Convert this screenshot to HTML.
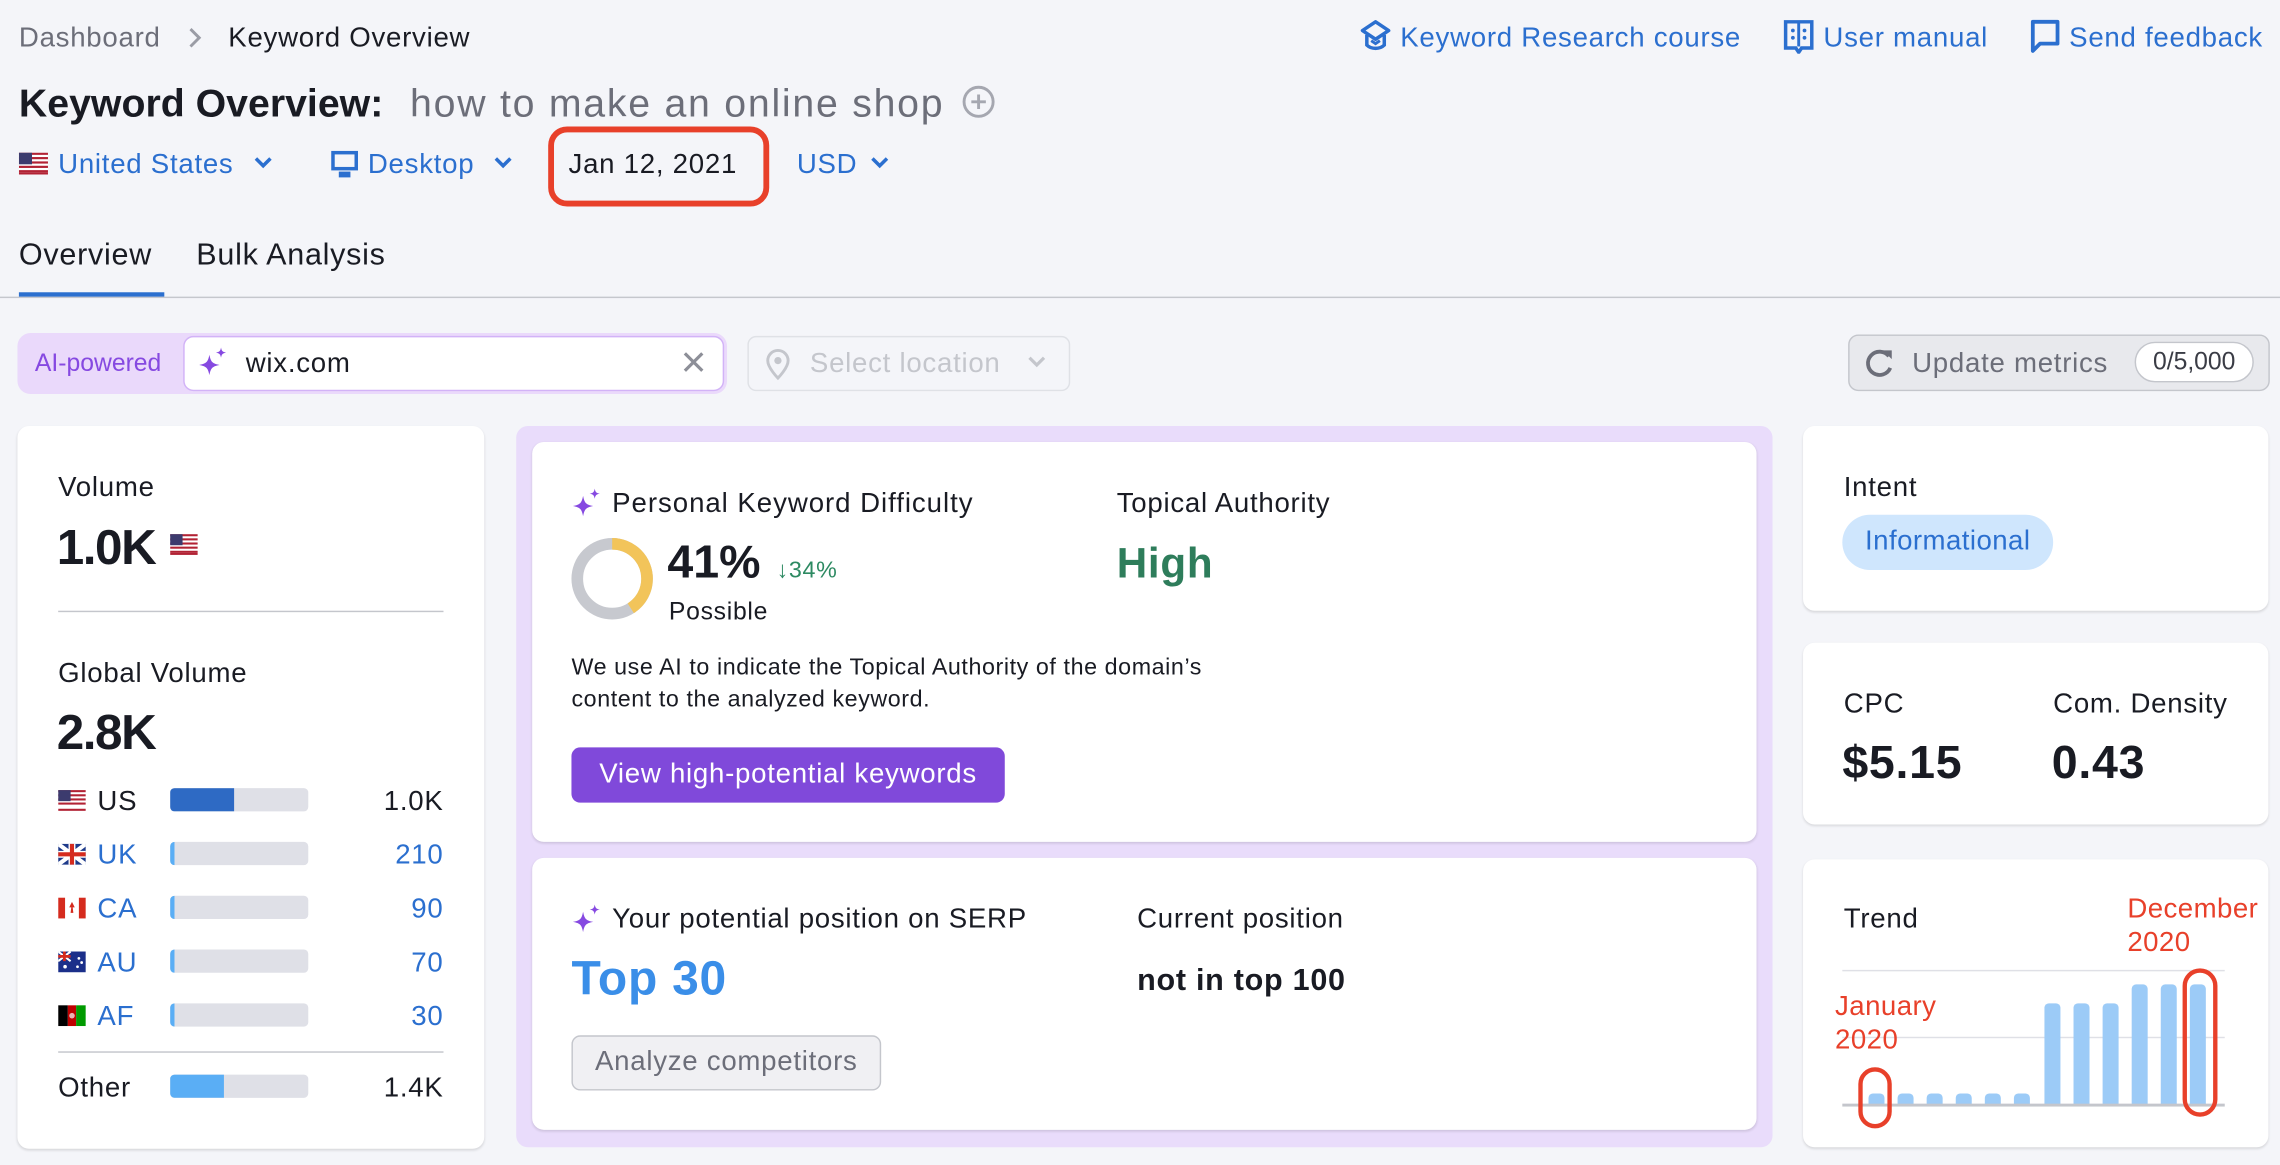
<!DOCTYPE html>
<html><head><meta charset="utf-8"><style>
*{margin:0;padding:0;box-sizing:border-box}
html,body{width:2280px;height:1164px;overflow:hidden;background:#f4f5f9}
#w{position:absolute;left:0;top:0;width:1568px;height:801px;transform:scale(1.454082);transform-origin:0 0;font-family:"Liberation Sans",sans-serif;color:#191b23;letter-spacing:.5px}
.a{position:absolute;white-space:nowrap}
.blue{color:#2b6fcf}
.gray{color:#6c6e79}
.card{position:absolute;background:#fff;border-radius:8px;box-shadow:0 1px 2px rgba(0,0,0,.12)}
.bar{position:absolute;left:117px;width:95px;height:16px;background:#dfe0e7;border-radius:3px;overflow:hidden}
.bar i{position:absolute;left:0;top:0;bottom:0;background:#5aaef5}
.tb{position:absolute;width:11px;background:#9ccbf7;border-radius:3px 3px 0 0}
</style></head><body><div id="w">
<div class="a gray" style="left:13px;top:16px;font-size:19px">Dashboard</div>
<svg class="a" style="left:128px;top:18px" width="12" height="16" viewBox="0 0 12 16"><path d="M3 2l6 6-6 6" fill="none" stroke="#9a9ca5" stroke-width="2"/></svg>
<div class="a" style="left:157px;top:16px;font-size:19px">Keyword Overview</div>
<svg class="a" style="left:934px;top:13px" width="24" height="24" viewBox="0 0 24 24"><path d="M12 2L3 8l9 6 9-6z" fill="none" stroke="#2b6fcf" stroke-width="2.4" stroke-linejoin="round"/><path d="M6 11v7c3 3 9 3 12 0v-7" fill="none" stroke="#2b6fcf" stroke-width="2.4"/><path d="M9 15l3 2 3-2" fill="none" stroke="#2b6fcf" stroke-width="2"/></svg>
<div class="a blue" style="left:963px;top:16px;font-size:19px">Keyword Research course</div>
<svg class="a" style="left:1226px;top:13px" width="22" height="24" viewBox="0 0 22 24"><path d="M2 2h18v18h-7l-2 3-2-3H2z" fill="none" stroke="#2b6fcf" stroke-width="2.4"/><path d="M11 3v16" stroke="#2b6fcf" stroke-width="2"/><circle cx="7" cy="8" r="1.3" fill="#2b6fcf"/><circle cx="7" cy="13" r="1.3" fill="#2b6fcf"/><circle cx="15" cy="8" r="1.3" fill="#2b6fcf"/><circle cx="15" cy="13" r="1.3" fill="#2b6fcf"/></svg>
<div class="a blue" style="left:1254px;top:16px;font-size:19px">User manual</div>
<svg class="a" style="left:1396px;top:13px" width="22" height="26" viewBox="0 0 22 26"><path d="M2 2h17v15H7l-5 5z" fill="none" stroke="#2b6fcf" stroke-width="2.6" stroke-linejoin="round"/></svg>
<div class="a blue" style="left:1423px;top:16px;font-size:19px">Send feedback</div>
<div class="a" style="left:13px;top:56px;font-size:27px;font-weight:bold;letter-spacing:0">Keyword Overview:</div>
<div class="a gray" style="left:282px;top:56px;font-size:27px;letter-spacing:1.2px">how to make an online shop</div>
<svg class="a" style="left:661px;top:58px" width="24" height="24" viewBox="0 0 24 24"><circle cx="12" cy="12" r="10" fill="none" stroke="#a5a7b0" stroke-width="2"/><path d="M12 7v10M7 12h10" stroke="#a5a7b0" stroke-width="2"/></svg>
<svg class="a" style="left:13px;top:105px" width="20" height="15" viewBox="0 0 20 15"><rect width="20" height="15" fill="#fff"/><g fill="#b22234"><rect y="0" width="20" height="1.5"/><rect y="3" width="20" height="1.5"/><rect y="6" width="20" height="1.5"/><rect y="9" width="20" height="1.5"/><rect y="12" width="20" height="1.5"/><rect y="13.5" width="20" height="1.5"/></g><rect width="9" height="8" fill="#3c3b6e"/></svg>
<div class="a blue" style="left:40px;top:103px;font-size:19px">United States</div>
<svg class="a" style="left:174px;top:107px" width="14" height="10" viewBox="0 0 14 10"><path d="M2 2l5 5 5-5" fill="none" stroke="#2b6fcf" stroke-width="2.4"/></svg>
<svg class="a" style="left:227px;top:103px" width="20" height="20" viewBox="0 0 20 20"><rect x="2" y="2" width="16" height="11" fill="none" stroke="#2b6fcf" stroke-width="2.4"/><rect x="6" y="15" width="8" height="4" fill="#2b6fcf"/></svg>
<div class="a blue" style="left:253px;top:103px;font-size:19px">Desktop</div>
<svg class="a" style="left:339px;top:107px" width="14" height="10" viewBox="0 0 14 10"><path d="M2 2l5 5 5-5" fill="none" stroke="#2b6fcf" stroke-width="2.4"/></svg>
<div class="a" style="left:377px;top:87px;width:152px;height:55px;border:4px solid #e8402a;border-radius:13px"></div>
<div class="a" style="left:391px;top:103px;font-size:19px">Jan 12, 2021</div>
<div class="a blue" style="left:548px;top:103px;font-size:19px">USD</div>
<svg class="a" style="left:598px;top:107px" width="14" height="10" viewBox="0 0 14 10"><path d="M2 2l5 5 5-5" fill="none" stroke="#2b6fcf" stroke-width="2.4"/></svg>
<div class="a" style="left:13px;top:164px;font-size:21px">Overview</div>
<div class="a" style="left:135px;top:164px;font-size:21px">Bulk Analysis</div>
<div class="a" style="left:0;top:204px;width:1568px;height:1px;background:#c5c7cd"></div>
<div class="a" style="left:13px;top:201px;width:100px;height:3px;background:#2b6fcf"></div>
<div class="a" style="left:12px;top:229px;width:488px;height:42px;background:#ead9fb;border-radius:9px"></div>
<div class="a" style="left:24px;top:240px;font-size:17px;color:#8649e1;letter-spacing:0">AI-powered</div>
<div class="a" style="left:126px;top:231px;width:372px;height:38px;background:#fff;border:1px solid #d2b3f7;border-radius:7px"></div>
<svg class="a" style="left:136px;top:238px" width="22" height="24" viewBox="0 0 22 24"><path d="M8 6c1 5 2 6 7 7-5 1-6 2-7 7-1-5-2-6-7-7 5-1 6-2 7-7z" fill="#8649e1"/><path d="M16 1c.5 2.5 1 3 3.5 3.5C17 5 16.5 5.5 16 8c-.5-2.5-1-3-3.5-3.5C15 4 15.5 3.5 16 1z" fill="#8649e1"/></svg>
<div class="a" style="left:169px;top:240px;font-size:19px">wix.com</div>
<svg class="a" style="left:469px;top:241px" width="16" height="16" viewBox="0 0 16 16"><path d="M2 2l12 12M14 2L2 14" stroke="#8d8f98" stroke-width="2.2"/></svg>
<div class="a" style="left:514px;top:231px;width:222px;height:38px;border:1px solid #dfe1e6;border-radius:6px"></div>
<svg class="a" style="left:525px;top:238px" width="20" height="24" viewBox="0 0 20 24"><path d="M10 22s-7-7-7-12a7 7 0 0114 0c0 5-7 12-7 12z" fill="none" stroke="#c4c6cc" stroke-width="2"/><circle cx="10" cy="10" r="2.5" fill="#c4c6cc"/></svg>
<div class="a" style="left:557px;top:240px;font-size:19px;color:#c4c6cc">Select location</div>
<svg class="a" style="left:706px;top:244px" width="14" height="10" viewBox="0 0 14 10"><path d="M2 2l5 5 5-5" fill="none" stroke="#c4c6cc" stroke-width="2.2"/></svg>
<div class="a" style="left:1271px;top:230px;width:290px;height:39px;background:#e8e9ed;border:1px solid #c4c6cc;border-radius:7px"></div>
<svg class="a" style="left:1281px;top:237px" width="24" height="24" viewBox="0 0 24 24"><path d="M18 8a8 8 0 10 1 8" fill="none" stroke="#6c6e79" stroke-width="2.6"/><path d="M14 4h6v6z" fill="#6c6e79"/></svg>
<div class="a gray" style="left:1315px;top:240px;font-size:19px">Update metrics</div>
<div class="a" style="left:1468px;top:235px;width:82px;height:28px;background:#fff;border:1px solid #c4c6cc;border-radius:14px;font-size:17px;text-align:center;line-height:26px;color:#3a3c45;letter-spacing:0">0/5,000</div>
<div class="card" style="left:12px;top:293px;width:321px;height:497px"></div>
<div class="a" style="left:40px;top:325px;font-size:19px">Volume</div>
<div class="a" style="left:39px;top:358px;font-size:34px;font-weight:bold;letter-spacing:-1px">1.0K</div>
<svg class="a" style="left:117px;top:367px" width="19" height="15" viewBox="0 0 20 15"><rect width="20" height="15" fill="#fff"/><g fill="#b22234"><rect y="0" width="20" height="1.5"/><rect y="3" width="20" height="1.5"/><rect y="6" width="20" height="1.5"/><rect y="9" width="20" height="1.5"/><rect y="12" width="20" height="1.5"/><rect y="13.5" width="20" height="1.5"/></g><rect width="9" height="8" fill="#3c3b6e"/></svg>
<div class="a" style="left:40px;top:420px;width:265px;height:1px;background:#c4c6cc"></div>
<div class="a" style="left:40px;top:453px;font-size:19px">Global Volume</div>
<div class="a" style="left:39px;top:485px;font-size:34px;font-weight:bold;letter-spacing:-1px">2.8K</div>
<svg class="a" style="left:40px;top:543px" width="19" height="15" viewBox="0 0 20 15"><rect width="20" height="15" fill="#fff"/><g fill="#b22234"><rect y="0" width="20" height="1.5"/><rect y="3" width="20" height="1.5"/><rect y="6" width="20" height="1.5"/><rect y="9" width="20" height="1.5"/><rect y="13.5" width="20" height="1.5"/></g><rect width="9" height="8" fill="#3c3b6e"/></svg>
<div class="a" style="left:67px;top:541px;font-size:19px">US</div>
<div class="bar" style="top:542px"><i style="width:44px;background:#2e6ac4"></i></div>
<div class="a" style="right:1263px;top:541px;font-size:19px">1.0K</div>
<svg class="a" style="left:40px;top:580px" width="19" height="15" viewBox="0 0 20 15"><rect width="20" height="15" fill="#1e3a8a"/><path d="M0 0l20 15M20 0L0 15" stroke="#fff" stroke-width="3"/><path d="M10 0v15M0 7.5h20" stroke="#fff" stroke-width="5"/><path d="M10 0v15M0 7.5h20" stroke="#d52b1e" stroke-width="3"/></svg>
<div class="a blue" style="left:67px;top:578px;font-size:19px">UK</div>
<div class="bar" style="top:579px"><i style="width:3px"></i></div>
<div class="a blue" style="right:1263px;top:578px;font-size:19px">210</div>
<svg class="a" style="left:40px;top:617px" width="19" height="15" viewBox="0 0 20 15"><rect width="20" height="15" fill="#fff"/><rect width="5" height="15" fill="#d52b1e"/><rect x="15" width="5" height="15" fill="#d52b1e"/><path d="M10 3l2 4h-1.5l.5 4h-2l.5-4H8z" fill="#d52b1e"/></svg>
<div class="a blue" style="left:67px;top:615px;font-size:19px">CA</div>
<div class="bar" style="top:616px"><i style="width:3px"></i></div>
<div class="a blue" style="right:1263px;top:615px;font-size:19px">90</div>
<svg class="a" style="left:40px;top:654px" width="19" height="15" viewBox="0 0 20 15"><rect width="20" height="15" fill="#1b2f8a"/><path d="M0 0l9 7M9 0L0 7" stroke="#fff" stroke-width="1.5"/><path d="M4.5 0v7M0 3.5h9" stroke="#d52b1e" stroke-width="2"/><circle cx="5" cy="11" r="1.3" fill="#fff"/><circle cx="15" cy="5" r="1" fill="#fff"/><circle cx="14" cy="11" r="1" fill="#fff"/><circle cx="17" cy="8" r="1" fill="#fff"/></svg>
<div class="a blue" style="left:67px;top:652px;font-size:19px">AU</div>
<div class="bar" style="top:653px"><i style="width:3px"></i></div>
<div class="a blue" style="right:1263px;top:652px;font-size:19px">70</div>
<svg class="a" style="left:40px;top:691px" width="19" height="15" viewBox="0 0 20 15"><rect width="7" height="15" fill="#000"/><rect x="7" width="6" height="15" fill="#be0000"/><rect x="13" width="7" height="15" fill="#009a00"/><circle cx="10" cy="7.5" r="2" fill="#e9b3b3"/></svg>
<div class="a blue" style="left:67px;top:689px;font-size:19px">AF</div>
<div class="bar" style="top:690px"><i style="width:3px"></i></div>
<div class="a blue" style="right:1263px;top:689px;font-size:19px">30</div>
<div class="a" style="left:40px;top:723px;width:265px;height:1px;background:#c4c6cc"></div>
<div class="a" style="left:40px;top:738px;font-size:19px">Other</div>
<div class="bar" style="top:739px"><i style="width:37px"></i></div>
<div class="a" style="right:1263px;top:738px;font-size:19px">1.4K</div>
<div class="a" style="left:355px;top:293px;width:864px;height:496px;background:#e9dcfb;border-radius:8px"></div>
<div class="card" style="left:366px;top:304px;width:842px;height:275px"></div>
<div class="card" style="left:366px;top:590px;width:842px;height:187px"></div>
<svg class="a" style="left:393px;top:335px" width="22" height="24" viewBox="0 0 22 24"><path d="M8 6c1 5 2 6 7 7-5 1-6 2-7 7-1-5-2-6-7-7 5-1 6-2 7-7z" fill="#8649e1"/><path d="M16 1c.5 2.5 1 3 3.5 3.5C17 5 16.5 5.5 16 8c-.5-2.5-1-3-3.5-3.5C15 4 15.5 3.5 16 1z" fill="#8649e1"/></svg>
<div class="a" style="left:421px;top:336px;font-size:19px;letter-spacing:.65px">Personal Keyword Difficulty</div>
<div class="a" style="left:768px;top:336px;font-size:19px">Topical Authority</div>
<svg class="a" style="left:392px;top:369px" width="58" height="58" viewBox="0 0 58 58"><circle cx="29" cy="29" r="24" fill="none" stroke="#c7c9cf" stroke-width="8"/><circle cx="29" cy="29" r="24" fill="none" stroke="#f2c45a" stroke-width="8" stroke-dasharray="61.8 200" transform="rotate(-90 29 29)"/></svg>
<div class="a" style="left:459px;top:368px;font-size:32px;font-weight:bold;letter-spacing:0">41%</div>
<div class="a" style="left:534px;top:384px;font-size:16px;color:#2d8a62">↓34%</div>
<div class="a" style="left:460px;top:411px;font-size:17px">Possible</div>
<div class="a" style="left:768px;top:372px;font-size:29px;font-weight:bold;color:#2e7d5b">High</div>
<div class="a" style="left:393px;top:449px;font-size:16px;line-height:22px;letter-spacing:.4px">We use AI to indicate the Topical Authority of the domain’s<br>content to the analyzed keyword.</div>
<div class="a" style="left:393px;top:514px;width:298px;height:38px;background:#8049da;border-radius:6px;color:#fff;font-size:19px;line-height:38px;text-align:center">View high-potential keywords</div>
<svg class="a" style="left:393px;top:621px" width="22" height="24" viewBox="0 0 22 24"><path d="M8 6c1 5 2 6 7 7-5 1-6 2-7 7-1-5-2-6-7-7 5-1 6-2 7-7z" fill="#8649e1"/><path d="M16 1c.5 2.5 1 3 3.5 3.5C17 5 16.5 5.5 16 8c-.5-2.5-1-3-3.5-3.5C15 4 15.5 3.5 16 1z" fill="#8649e1"/></svg>
<div class="a" style="left:421px;top:622px;font-size:19px">Your potential position on SERP</div>
<div class="a" style="left:782px;top:622px;font-size:19px">Current position</div>
<div class="a" style="left:393px;top:654px;font-size:33px;font-weight:bold;color:#3a8ee8">Top 30</div>
<div class="a" style="left:782px;top:663px;font-size:21px;font-weight:bold">not in top 100</div>
<div class="a" style="left:393px;top:712px;width:213px;height:38px;background:#f0f0f3;border:1px solid #c4c6cc;border-radius:6px;color:#6c6e79;font-size:19px;line-height:36px;text-align:center">Analyze competitors</div>
<div class="card" style="left:1240px;top:293px;width:320px;height:127px"></div>
<div class="a" style="left:1268px;top:325px;font-size:19px">Intent</div>
<div class="a blue" style="left:1267px;top:354px;width:145px;height:38px;background:#cfe6fd;border-radius:19px;font-size:19px;line-height:38px;text-align:center;letter-spacing:.3px">Informational</div>
<div class="card" style="left:1240px;top:442px;width:320px;height:125px"></div>
<div class="a" style="left:1268px;top:474px;font-size:19px">CPC</div>
<div class="a" style="left:1412px;top:474px;font-size:19px">Com. Density</div>
<div class="a" style="left:1267px;top:506px;font-size:32px;font-weight:bold">$5.15</div>
<div class="a" style="left:1411px;top:506px;font-size:32px;font-weight:bold">0.43</div>
<div class="card" style="left:1240px;top:591px;width:320px;height:198px"></div>
<div class="a" style="left:1268px;top:622px;font-size:19px">Trend</div>
<div class="a" style="left:1267px;top:667px;width:263px;height:1px;background:#dfe0e6"></div>
<div class="a" style="left:1267px;top:713px;width:263px;height:1px;background:#dfe0e6"></div>
<div class="tb" style="left:1285px;top:752px;height:8px"></div>
<div class="tb" style="left:1305px;top:752px;height:8px"></div>
<div class="tb" style="left:1325px;top:752px;height:8px"></div>
<div class="tb" style="left:1345px;top:752px;height:8px"></div>
<div class="tb" style="left:1365px;top:752px;height:8px"></div>
<div class="tb" style="left:1385px;top:752px;height:8px"></div>
<div class="tb" style="left:1406px;top:690px;height:70px"></div>
<div class="tb" style="left:1426px;top:690px;height:70px"></div>
<div class="tb" style="left:1446px;top:690px;height:70px"></div>
<div class="tb" style="left:1466px;top:677px;height:83px"></div>
<div class="tb" style="left:1486px;top:677px;height:83px"></div>
<div class="tb" style="left:1506px;top:677px;height:83px"></div>
<div class="a" style="left:1267px;top:759px;width:263px;height:2px;background:#c4c6cc"></div>
<div class="a" style="left:1463px;top:614px;font-size:19px;color:#e8402a;line-height:23px;letter-spacing:.3px">December<br>2020</div>
<div class="a" style="left:1262px;top:681px;font-size:19px;color:#e8402a;line-height:23px;letter-spacing:.3px">January<br>2020</div>
<div class="a" style="left:1278px;top:734px;width:23px;height:42px;border:3px solid #e8402a;border-radius:12px"></div>
<div class="a" style="left:1501px;top:666px;width:24px;height:102px;border:3px solid #e8402a;border-radius:12px"></div>
</div></body></html>
